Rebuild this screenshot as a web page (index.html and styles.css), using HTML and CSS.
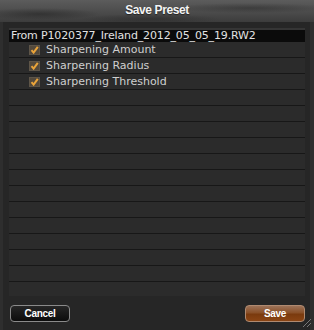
FILE: index.html
```html
<html>
<head>
	<title>Save Preset</title>
	<meta charset='UTF-8'>
	<link rel="stylesheet" href="styles.css">
</head>
<body>
	<div class='window'>
		<div class='titlebar'>Save Preset</div>
		<div class='content'>
			<div class='list'>
				<div class='listHead'>From P1020377_Ireland_2012_05_05_19.RW2</div>
				<div class='row'>
					<span class='check'><svg width='9' height='8' viewBox='0 0 9 8'><path d='M1.5 4.2 L3.6 6.6 L7.8 0.8' fill='none' stroke='#eaa43a' stroke-width='2'/></svg></span>
					<span class='label'>Sharpening Amount</span>
				</div>
				<div class='row'>
					<span class='check'><svg width='9' height='8' viewBox='0 0 9 8'><path d='M1.5 4.2 L3.6 6.6 L7.8 0.8' fill='none' stroke='#eaa43a' stroke-width='2'/></svg></span>
					<span class='label'>Sharpening Radius</span>
				</div>
				<div class='row'>
					<span class='check'><svg width='9' height='8' viewBox='0 0 9 8'><path d='M1.5 4.2 L3.6 6.6 L7.8 0.8' fill='none' stroke='#eaa43a' stroke-width='2'/></svg></span>
					<span class='label'>Sharpening Threshold</span>
				</div>
				<div class='row'></div>
				<div class='row'></div>
				<div class='row'></div>
				<div class='row'></div>
				<div class='row'></div>
				<div class='row'></div>
				<div class='row'></div>
				<div class='row'></div>
				<div class='row'></div>
				<div class='row'></div>
				<div class='row'></div>
				<div class='row'></div>
				<div class='row'></div>
			</div>
			<div class='buttons'>
				<div class='btn cancel'>Cancel</div>
				<div class='btn save'>Save</div>
			</div>
		</div>
		<svg class='grip' width='10' height='10' viewBox='0 0 10 10'>
			<line x1='1' y1='9' x2='9' y2='1' stroke='#777' stroke-width='1'/>
			<line x1='5' y1='9' x2='9' y2='5' stroke='#777' stroke-width='1'/>
		</svg>
	</div>
</body>
</html>
```
FILE: styles.css
```css
body {
	margin: 0;
	background: #262626;
	font-family: "DejaVu Sans", Verdana, sans-serif;
}
div.window {
	position: relative;
	width: 314px;
	height: 330px;
	overflow: hidden;
	background: #262626;
	box-shadow: inset 3px 0 0 #2e2e2e, inset -4px 0 0 #2e2e2e;
}
div.titlebar {
	height: 22px;
	line-height: 21px;
	text-align: center;
	font-family: "Liberation Sans", Arial, sans-serif;
	font-size: 12px;
	letter-spacing: -0.4px;
	font-weight: bold;
	color: #f4f4f4;
	text-shadow: 0 1px 1px #222;
	background:
		radial-gradient(ellipse 60px 6px at 40px 14px, rgba(30,30,30,0.5), transparent),
		radial-gradient(ellipse 80px 5px at 250px 8px, rgba(30,30,30,0.4), transparent),
		radial-gradient(ellipse 70px 5px at 150px 19px, rgba(30,30,30,0.4), transparent),
		linear-gradient(#5c5c5c, #4a4a4a 60%, #3c3c3c);
}
div.content {
	padding: 6px 9px 0 9px;
}
div.list {
	height: 266px;
	overflow: hidden;
	background: #2b2b2b;
	border-top: 2px solid #353535;
}
div.listHead {
	height: 12px;
	line-height: 12px;
	padding-left: 2px;
	font-size: 11px;
	letter-spacing: -0.15px;
	color: #e2e2e2;
	background: #0b0b0b;
	white-space: nowrap;
}
div.row {
	height: 15px;
	border-bottom: 1px solid #171717;
	display: flex;
	align-items: center;
	padding-left: 20px;
	gap: 6px;
}
span.check {
	width: 9px;
	height: 8px;
	display: flex;
	background: #53493c;
	border: 1px solid #5e5548;
}
span.label {
	font-size: 11px;
	color: #cfcfcf;
}
div.buttons {
	display: flex;
	justify-content: space-between;
	padding: 9px 0 0 1px;
}
div.btn {
	width: 58px;
	height: 15px;
	line-height: 15px;
	text-align: center;
	font-family: "Liberation Sans", Arial, sans-serif;
	font-size: 10px;
	letter-spacing: -0.3px;
	font-weight: bold;
	color: #fff;
	border-radius: 4px;
}
div.cancel {
	border: 1px solid #8a8a8a;
	background: linear-gradient(#262626, #0c0c0c);
}
div.save {
	border: 1px solid #b08a70;
	background: linear-gradient(#9c7258, #8a5028 45%, #7a3a0e 55%, #8a4414);
}
svg.grip {
	position: absolute;
	right: 2px;
	bottom: 2px;
}
```
